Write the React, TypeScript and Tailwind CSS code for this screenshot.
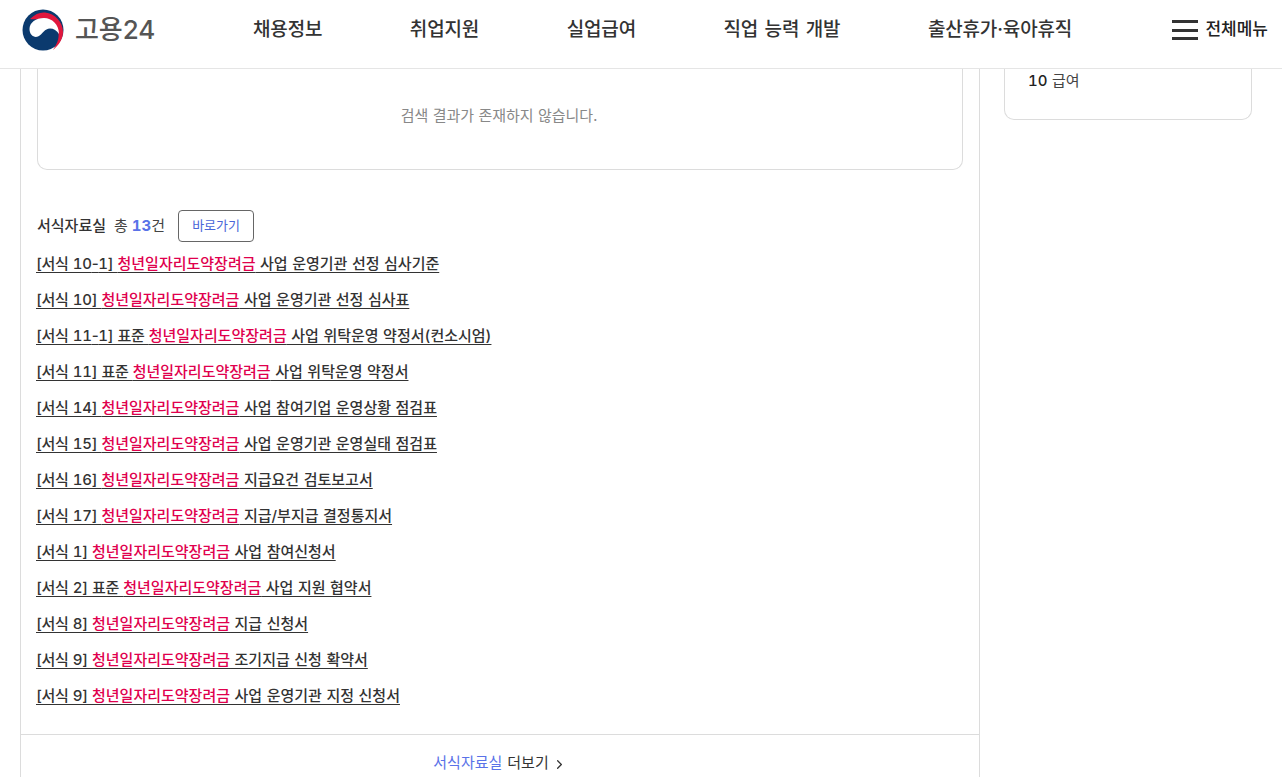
import React from 'react';
import { ChevronRight } from 'lucide-react';

const NAV = ['채용정보', '취업지원', '실업급여', '직업 능력 개발', '출산휴가·육아휴직'];

const FORMS: [string, string][] = [
  ['[서식 10-1] ', ' 사업 운영기관 선정 심사기준'],
  ['[서식 10] ', ' 사업 운영기관 선정 심사표'],
  ['[서식 11-1] 표준 ', ' 사업 위탁운영 약정서(컨소시엄)'],
  ['[서식 11] 표준 ', ' 사업 위탁운영 약정서'],
  ['[서식 14] ', ' 사업 참여기업 운영상황 점검표'],
  ['[서식 15] ', ' 사업 운영기관 운영실태 점검표'],
  ['[서식 16] ', ' 지급요건 검토보고서'],
  ['[서식 17] ', ' 지급/부지급 결정통지서'],
  ['[서식 1] ', ' 사업 참여신청서'],
  ['[서식 2] 표준 ', ' 사업 지원 협약서'],
  ['[서식 8] ', ' 지급 신청서'],
  ['[서식 9] ', ' 조기지급 신청 확약서'],
  ['[서식 9] ', ' 사업 운영기관 지정 신청서'],
];

const Logo = () => (
  <svg width="42" height="42" viewBox="0 0 42 42">
    <circle cx="21" cy="21" r="20.500" fill="#0b3a6e" />
    <path d="M8 10C13 5 18 3 23 3.500 33 4.500 41 13 41 23 41 30 37 36 31 41 35 35 37 30 36.500 25 36 16 30 9.500 22 9.500 16.500 9.500 12 11 8 10Z" fill="#e0173d" />
    <path d="M7.500 20C7.500 13.500 14 9 22 9 30 9 37 15.500 37 25 35 21.500 31.500 19.500 28 19.500 22.500 19.500 21 25 16 27.500 12 29 7.500 26 7.500 20Z" fill="#fff" />
  </svg>
);

// the hyphen in "10-1" has to stay narrow, tabular figures widen it
const Prefix = ({ text }: { text: string }) => {
  const [head, tail] = text.split('-');
  return (
    <span className="tracking-[-0.3px]">
      {head}
      {tail !== undefined && <span className="normal-nums tracking-[-0.3px]">-</span>}
      {tail}
    </span>
  );
};

export default function App() {
  return (
    <div className="flex h-screen flex-col overflow-hidden bg-white text-[#222] tabular-nums font-['Inter','Noto_Sans_CJK_KR',sans-serif]">
      <header className="flex h-[69px] shrink-0 items-center border-b border-[#e5e5e5] pb-[8px] pl-[22px] pr-[14px]">
        <div className="flex w-[231px] items-center gap-[11px]">
          <Logo />
          <span className="text-[26px] font-medium leading-none normal-nums tracking-[-0.1px] text-[#555]">고용24</span>
        </div>
        <nav className="flex items-center gap-[87.5px]">
          {NAV.map((n) => (
            <span key={n} className="text-[19px] font-medium tracking-[-0.15px] [word-spacing:1.5px] text-[#333]">{n}</span>
          ))}
        </nav>
        <div className="ml-auto flex items-center gap-[7px]">
          <div className="flex h-[20px] w-[26px] flex-col justify-between">
            <span className="h-[3px] bg-[#333]" />
            <span className="h-[3px] bg-[#333]" />
            <span className="h-[3px] bg-[#333]" />
          </div>
          <span className="text-[17px] font-medium text-[#222]">전체메뉴</span>
        </div>
      </header>

      <main className="flex flex-1 items-start overflow-hidden pl-[20px]">
        <section className="w-[960px] shrink-0 border-x border-[#dcdcdc]">
          <div className="mx-[16px] flex h-[101px] items-center justify-center rounded-b-[10px] border-x border-b border-[#dcdcdc] pb-[6px] pr-[2px]">
            <p className="text-[15px] [word-spacing:0.3px] text-[#888]">검색 결과가 존재하지 않습니다.</p>
          </div>

          <div className="mt-[40px] flex items-center pl-[16px]">
            <h3 className="text-[15px] font-medium text-[#333]">서식자료실</h3>
            <span className="ml-[8px] text-[15px] text-[#444]">
              총 <strong className="font-bold text-[#5a72e8]">13</strong>건
            </span>
            <button className="ml-[13px] h-[32px] w-[76px] rounded-[4px] border border-[#666] text-[13px] text-[#4a66d8]">바로가기</button>
          </div>

          <ul className="mt-[4px] pl-[15px]">
            {FORMS.map(([a, b], i) => (
              <li key={i} className="flex h-[36px] items-center">
                <a className="whitespace-pre text-[15px] font-medium [word-spacing:0.5px] text-[#333] underline underline-offset-[3px]">
                  <Prefix text={a} /><span className="text-[#e0004d]">청년일자리도약장려금</span>{b}
                </a>
              </li>
            ))}
          </ul>

          <div className="mt-[20px] flex h-[58px] items-start justify-center border-t border-[#dcdcdc] pt-[17px]">
            <span className="text-[15px] text-[#5a72e8]">서식자료실</span>
            <span className="ml-[5px] text-[15px] text-[#333]">더보기</span>
            <ChevronRight size={15} strokeWidth={2} className="ml-[3px] mt-[5px] text-[#333]" />
          </div>
        </section>

        <aside className="ml-[24px] flex h-[51px] w-[248px] shrink-0 items-start rounded-b-[10px] border-x border-b border-[#dcdcdc] pl-[23px] pt-px">
          <p className="text-[15px] [word-spacing:0.5px] text-[#444]"><strong className="font-medium text-[#222]">10</strong> 급여</p>
        </aside>
      </main>
    </div>
  );
}
